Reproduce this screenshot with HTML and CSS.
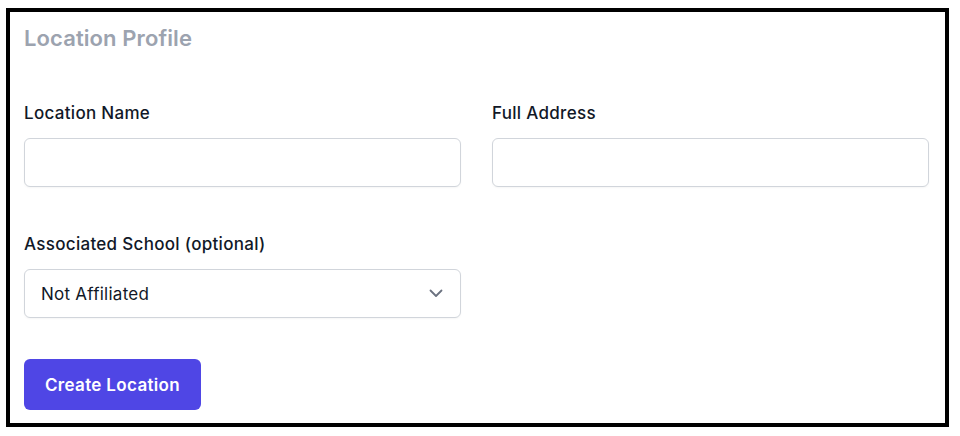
FILE: index.html
```html
<!DOCTYPE html>
<html lang="en">
<head>
<meta charset="utf-8">
<title>Location Profile</title>
<link rel="stylesheet" href="styles.css">
</head>
<body>
<form class="card">
  <h2 class="title">Location Profile</h2>
  <div class="grid">
    <div class="field">
      <label class="label" for="name">Location Name</label>
      <input class="input" id="name" type="text">
    </div>
    <div class="field">
      <label class="label" for="addr">Full Address</label>
      <input class="input" id="addr" type="text">
    </div>
    <div class="field field-school">
      <label class="label" for="school">Associated School (optional)</label>
      <div class="select-wrap">
        <select class="input select" id="school">
          <option>Not Affiliated</option>
        </select>
        <svg class="chevron" width="14" height="9" viewBox="0 0 14 9" aria-hidden="true">
          <path d="M1.5 1.5 L7 7 L12.5 1.5" fill="none" stroke="#6b7280" stroke-width="1.8" stroke-linecap="round" stroke-linejoin="round"/>
        </svg>
      </div>
    </div>
  </div>
  <button class="btn" type="button">Create Location</button>
</form>
</body>
</html>
```
FILE: styles.css
```css
* { box-sizing: border-box; }
html, body { margin: 0; padding: 0; background: #fff; }
body {
  font-family: Inter, "Noto Sans", "Liberation Sans", sans-serif;
  color: #111827;
}
.card {
  width: 943px;
  height: 419px;
  margin: 8px 0 0 6px;
  border: 4px solid #000;
  padding: 12px 16px 12px 14px;
  display: flex;
  flex-direction: column;
  background: #fff;
}
.title {
  margin: 0;
  font-size: 22px;
  line-height: 28px;
  font-weight: 600;
  letter-spacing: 0.1px;
  color: #9ca3af;
}
.grid {
  margin-top: 49px;
  display: grid;
  grid-template-columns: 437px 437px;
  column-gap: 31px;
  row-gap: 45px;
}
.field {
  display: flex;
  flex-direction: column;
  gap: 13px;
}
.field-school { grid-column: 1; }
.label {
  font-size: 17px;
  line-height: 24px;
  font-weight: 500;
  letter-spacing: 0.3px;
  color: #111827;
}
.input {
  width: 100%;
  height: 49px;
  border: 1px solid #d1d5db;
  border-radius: 6px;
  background: #fff;
  padding: 0 16px;
  font: inherit;
  font-size: 17px;
  letter-spacing: 0.25px;
  color: #111827;
  box-shadow: 0 1px 2px rgba(0,0,0,0.04);
  outline: none;
}
.select-wrap { position: relative; }
.select {
  appearance: none;
  -webkit-appearance: none;
  padding-right: 40px;
}
.chevron {
  position: absolute;
  right: 18px;
  top: 20px;
  pointer-events: none;
}
.btn {
  margin-top: 41px;
  align-self: flex-start;
  height: 51px;
  padding: 0 21px;
  border: none;
  border-radius: 6px;
  background: #4f46e5;
  color: #fff;
  font-family: inherit;
  font-size: 17px;
  font-weight: 600;
  letter-spacing: 0.33px;
}
```
